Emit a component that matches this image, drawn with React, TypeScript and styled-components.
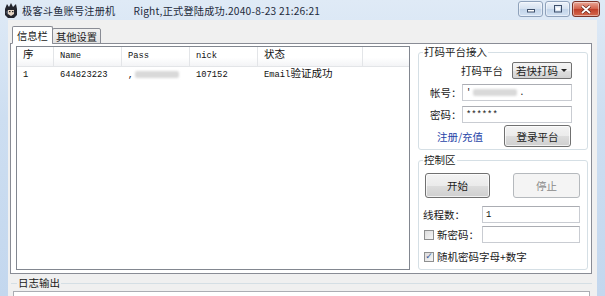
import React from 'react';
import styled, { createGlobalStyle } from 'styled-components';

const GlobalStyle = createGlobalStyle`
  html, body {
    margin: 0;
    padding: 0;
    background: #c8daef;
  }
  * {
    box-sizing: border-box;
  }
`;

const CJK = `"Noto Sans CJK SC", "Noto Sans", sans-serif`;
const MONO = `"Liberation Mono", "Noto Sans CJK SC", monospace`;

const Window = styled.div`
  width: 605px;
  height: 296px;
  overflow: hidden;
  display: flex;
  flex-direction: column;
  background: linear-gradient(180deg, #dfeaf6 0%, #cddef1 40%, #c3d7ee 100%);
  font-family: ${CJK};
  font-size: 10.5px;
  color: #1a1a1a;
`;

const TitleBar = styled.div`
  height: 20px;
  flex: none;
  display: flex;
  align-items: center;
  padding-left: 4px;
`;

const Title = styled.span`
  font-size: 10.2px;
  letter-spacing: 0.2px;
  color: #1e2b3c;
  margin-left: 4px;
`;

const Status = styled(Title)`
  margin-left: 18px;
`;

const CaptionGroup = styled.div`
  margin-left: auto;
  margin-right: 5px;
  align-self: flex-start;
  display: flex;
  gap: 2px;
  padding-top: 1px;
`;

const CaptionButton = styled.div<{ $close?: boolean }>`
  width: ${p => (p.$close ? '28px' : '25px')};
  height: 16px;
  display: flex;
  align-items: center;
  justify-content: center;
  border: 1px solid ${p => (p.$close ? '#7b3429' : '#8fa2bb')};
  border-radius: 3px;
  background: ${p =>
    p.$close
      ? 'linear-gradient(180deg, #e9a898 0%, #d4634c 48%, #c0402a 52%, #d56a4e 100%)'
      : 'linear-gradient(180deg, #edf3fa 0%, #d6e2f0 48%, #c2d4e9 52%, #d3e2f3 100%)'};
  box-shadow: inset 0 0 0 1px rgba(255, 255, 255, 0.45);
`;

const Client = styled.div`
  flex: 1;
  margin: 0 8px;
  background: #f0f0f0;
  display: flex;
  flex-direction: column;
  padding-top: 6px;
  min-height: 0;
`;

const Tabs = styled.div`
  display: flex;
  align-items: flex-end;
  padding-left: 4px;
  height: 18px;
  position: relative;
  z-index: 1;
`;

const Tab = styled.div<{ $active?: boolean }>`
  height: ${p => (p.$active ? '18px' : '16px')};
  padding: 0 ${p => (p.$active ? '4px' : '3px')};
  margin-left: ${p => (p.$active ? '0' : '-1px')};
  display: flex;
  align-items: center;
  font-size: 10.3px;
  border: 1px solid #898c95;
  border-bottom: ${p => (p.$active ? '1px solid #ffffff' : '1px solid #898c95')};
  border-radius: 2px 2px 0 0;
  background: ${p => (p.$active ? '#ffffff' : 'linear-gradient(180deg, #f2f2f2 0%, #e3e3e3 100%)')};
`;

const TabPage = styled.div`
  margin: -1px 5px 0 2px;
  height: 231px;
  flex: none;
  border: 1px solid #898c95;
  background: #ffffff;
  display: flex;
  padding: 2px 3px 2px 5px;
  gap: 8px;
`;

const ListView = styled.div`
  width: 394px;
  height: 224px;
  border: 1px solid #828790;
  background: #ffffff;
  display: flex;
  flex-direction: column;
`;

const HeaderRow = styled.div`
  display: flex;
  height: 20px;
  line-height: 19px;
  background: linear-gradient(180deg, #ffffff 0%, #ffffff 55%, #f3f4f6 100%);
  border-bottom: 1px solid #e3e5e8;
`;

const Row = styled.div`
  display: flex;
  height: 16px;
  line-height: 16px;
`;

const Cell = styled.div<{ $w: number; $head?: boolean }>`
  width: ${p => p.$w}px;
  flex: none;
  padding-left: 6px;
  font-family: ${MONO};
  font-size: 8.8px;
  color: #111;
  border-right: ${p => (p.$head ? '1px solid #e3e5e8' : 'none')};
  white-space: nowrap;
`;

const Han = styled.span`
  font-family: ${CJK};
  font-size: 10.5px;
  line-height: 1;
`;

const Blur = styled.span<{ $w: number }>`
  display: inline-block;
  width: ${p => p.$w}px;
  height: 7px;
  margin: 0 2px;
  background: #d9d9d9;
  border-radius: 2px;
  filter: blur(1.2px);
  vertical-align: middle;
`;

const Side = styled.div`
  width: 170px;
  display: flex;
  flex-direction: column;
  gap: 4px;
`;

const Group = styled.fieldset<{ $h: number }>`
  margin: 0;
  min-inline-size: 0;
  height: ${p => p.$h}px;
  border: 1px solid #d5dfe5;
  border-radius: 3px;
  display: flex;
  flex-direction: column;
  padding: 0;
`;

const Legend = styled.legend`
  font-size: 10.5px;
  line-height: 12px;
  padding: 0 1px;
  margin-left: 4px;
`;

const FormRow = styled.div<{ $top: number; $left?: number; $right?: number; $end?: boolean }>`
  display: flex;
  align-items: center;
  margin-top: ${p => p.$top}px;
  padding-left: ${p => p.$left ?? 0}px;
  padding-right: ${p => p.$right ?? 0}px;
  justify-content: ${p => (p.$end ? 'flex-end' : 'flex-start')};
`;

const Label = styled.span<{ $w?: number }>`
  width: ${p => (p.$w ? `${p.$w}px` : 'auto')};
  flex: none;
  font-size: 10.5px;
  white-space: nowrap;
`;

const Input = styled.div<{ $w: number }>`
  width: ${p => p.$w}px;
  height: 17px;
  border: 1px solid #c9ccd2;
  border-top-color: #abadb3;
  background: #ffffff;
  display: flex;
  align-items: center;
  padding-left: 3px;
  font-family: ${MONO};
  font-size: 8.8px;
  color: #111;
`;

const Combo = styled.div`
  width: 60px;
  height: 17px;
  margin-left: 9px;
  border: 1px solid #707070;
  border-radius: 2px;
  background: linear-gradient(180deg, #f4f4f4 0%, #ececec 50%, #dfdfdf 51%, #d2d2d2 100%);
  display: flex;
  align-items: center;
  justify-content: space-between;
  padding: 0 4px 0 3px;
  font-size: 10.5px;
`;

const Arrow = styled.span`
  width: 0;
  height: 0;
  border-left: 3px solid transparent;
  border-right: 3px solid transparent;
  border-top: 3px solid #222;
`;

const Button = styled.div<{ $w: number; $h: number; $disabled?: boolean }>`
  width: ${p => p.$w}px;
  height: ${p => p.$h}px;
  flex: none;
  display: flex;
  align-items: center;
  justify-content: center;
  font-size: 10.5px;
  border-radius: 3px;
  border: 1px solid ${p => (p.$disabled ? '#b5b9bd' : '#707070')};
  color: ${p => (p.$disabled ? '#8a8a8a' : '#1a1a1a')};
  background: ${p =>
    p.$disabled
      ? '#f4f4f4'
      : 'linear-gradient(180deg, #f3f3f3 0%, #ebebeb 50%, #dddddd 51%, #cfcfcf 100%)'};
  box-shadow: ${p => (p.$disabled ? 'none' : 'inset 0 0 0 1px rgba(255,255,255,0.7)')};
`;

const LinkText = styled.span`
  color: #1f45a8;
  font-size: 10.5px;
  margin-left: 18px;
  margin-right: auto;
`;

const Check = styled.span`
  width: 10px;
  height: 10px;
  flex: none;
  margin-right: 3px;
  border: 1px solid #8e8f8f;
  background: linear-gradient(135deg, #dcdcdc 0%, #f6f6f6 100%);
  display: flex;
  align-items: center;
  justify-content: center;
  color: #3d5a98;
  font-size: 9px;
  line-height: 1;
  font-family: "DejaVu Sans", sans-serif;
`;

const LogGroup = styled.fieldset`
  margin: 3px 5px 0 3px;
  padding: 0 2px;
  min-inline-size: 0;
  border: none;
  border-top: 1px solid #d5dfe5;
  flex: 1;
`;

const LogBox = styled.div`
  height: 30px;
  margin-top: 2px;
  border: 1px solid #abadb3;
  background: #ffffff;
`;

function AppIcon() {
  return (
    <svg width="14" height="15" viewBox="0 0 14 15">
      <path d="M1 6 L3 1 L5 4 L7 0 L9 4 L12 1 L13 6 L13 12 L10 15 L4 15 L1 12 Z" fill="#23252e" />
      <path d="M4 7 L10 7 L10 11 L7 13 L4 11 Z" fill="#e6d6c6" />
      <rect x="5" y="8" width="1.5" height="1.2" fill="#222" />
      <rect x="8" y="8" width="1.5" height="1.2" fill="#222" />
      <path d="M2 9 L4 7 L4 12 Z" fill="#5a6270" />
    </svg>
  );
}

function MinGlyph() {
  return (
    <svg width="10" height="8" viewBox="0 0 10 8">
      <rect x="1.5" y="4.5" width="7" height="2.5" fill="#fff" stroke="#3d4f6a" strokeWidth="1" />
    </svg>
  );
}

function MaxGlyph() {
  return (
    <svg width="10" height="8" viewBox="0 0 10 8">
      <rect x="1.5" y="0.5" width="7" height="6.5" fill="none" stroke="#3d4f6a" strokeWidth="1" />
      <rect x="3" y="2.5" width="4" height="3" fill="#fff" />
    </svg>
  );
}

function CloseGlyph() {
  return (
    <svg width="12" height="9" viewBox="0 0 12 9">
      <path d="M2 1 L10 8 M10 1 L2 8" stroke="#5a1d14" strokeWidth="3" />
      <path d="M2 1 L10 8 M10 1 L2 8" stroke="#ffffff" strokeWidth="1.8" />
    </svg>
  );
}

const columns = [
  { key: 'idx', title: '序', w: 37 },
  { key: 'name', title: 'Name', w: 68 },
  { key: 'pass', title: 'Pass', w: 68 },
  { key: 'nick', title: 'nick', w: 68 },
  { key: 'state', title: '状态', w: 105 },
];

export default function App() {
  return (
    <>
      <GlobalStyle />
      <Window>
        <TitleBar>
          <AppIcon />
          <Title>极客斗鱼账号注册机</Title>
          <Status>Right,正式登陆成功.2040-8-23 21:26:21</Status>
          <CaptionGroup>
            <CaptionButton><MinGlyph /></CaptionButton>
            <CaptionButton><MaxGlyph /></CaptionButton>
            <CaptionButton $close><CloseGlyph /></CaptionButton>
          </CaptionGroup>
        </TitleBar>

        <Client>
          <Tabs>
            <Tab $active>信息栏</Tab>
            <Tab>其他设置</Tab>
          </Tabs>

          <TabPage>
            <ListView>
              <HeaderRow>
                {columns.map(c => (
                  <Cell key={c.key} $w={c.w} $head>
                    {/[\u4e00-\u9fff]/.test(c.title) ? <Han>{c.title}</Han> : c.title}
                  </Cell>
                ))}
              </HeaderRow>
              <Row>
                <Cell $w={37}>1</Cell>
                <Cell $w={68}>644823223</Cell>
                <Cell $w={68}>,<Blur $w={44} /></Cell>
                <Cell $w={68}>107152</Cell>
                <Cell $w={105}>Email<Han>验证成功</Han></Cell>
              </Row>
            </ListView>

            <Side>
              <Group $h={104}>
                <Legend>打码平台接入</Legend>
                <FormRow $top={4} $right={15} $end>
                  <Label>打码平台</Label>
                  <Combo>若快打码<Arrow /></Combo>
                </FormRow>
                <FormRow $top={5} $left={11}>
                  <Label $w={32}>帐号：</Label>
                  <Input $w={110}>'<Blur $w={44} />.</Input>
                </FormRow>
                <FormRow $top={5} $left={11}>
                  <Label $w={32}>密码：</Label>
                  <Input $w={110}>******</Input>
                </FormRow>
                <FormRow $top={2} $right={16}>
                  <LinkText>注册/充值</LinkText>
                  <Button $w={67} $h={22}>登录平台</Button>
                </FormRow>
              </Group>

              <Group $h={116}>
                <Legend>控制区</Legend>
                <FormRow $top={7} $left={6} $right={7}>
                  <Button $w={65} $h={25}>开始</Button>
                  <span style={{ flex: 1 }} />
                  <Button $w={67} $h={25} $disabled>停止</Button>
                </FormRow>
                <FormRow $top={8} $left={4}>
                  <Label $w={59}>线程数：</Label>
                  <Input $w={98}>1</Input>
                </FormRow>
                <FormRow $top={3} $left={5}>
                  <Check />
                  <Label $w={45}>新密码：</Label>
                  <Input $w={98} />
                </FormRow>
                <FormRow $top={6} $left={5}>
                  <Check>✓</Check>
                  <Label>随机密码字母+数字</Label>
                </FormRow>
              </Group>
            </Side>
          </TabPage>

          <LogGroup>
            <Legend>日志输出</Legend>
            <LogBox />
          </LogGroup>
        </Client>
      </Window>
    </>
  );
}
